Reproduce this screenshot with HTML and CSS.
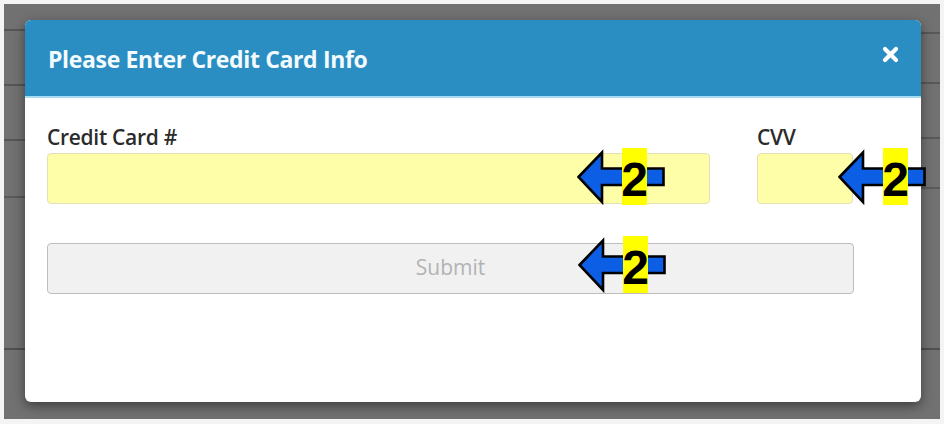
FILE: index.html
```html
<!DOCTYPE html>
<html lang="en">
<head>
<meta charset="utf-8">
<title>Please Enter Credit Card Info</title>
<link rel="stylesheet" href="styles.css">
</head>
<body>
<div class="backdrop">
  <div class="modal">
    <div class="modal-header">
      <h4 class="modal-title">Please Enter Credit Card Info</h4>
      <button class="close" type="button" aria-label="Close">
        <svg width="17" height="17" viewBox="0 0 17 17"><path d="M3 3 L14 14 M14 3 L3 14" stroke="#fff" stroke-width="4.2" stroke-linecap="round"/></svg>
      </button>
    </div>
    <div class="modal-body">
      <div class="row">
        <div class="field field-card">
          <label class="label">Credit Card #</label>
          <div class="input"></div>
        </div>
        <div class="field field-cvv">
          <label class="label">CVV</label>
          <div class="input"></div>
        </div>
      </div>
      <button class="submit" type="button">Submit</button>
    </div>

    <div class="note note-1">
      <svg class="arrow" width="88" height="58" viewBox="0 0 88 58"><polygon points="1.5,29 25,4.5 25,20.5 86.5,20.5 86.5,37 25,37 25,54" fill="#0c5fe4" stroke="#000" stroke-width="2.6" stroke-linejoin="miter"/></svg>
      <span class="num">2</span>
    </div>
    <div class="note note-2">
      <svg class="arrow" width="88" height="58" viewBox="0 0 88 58"><polygon points="1.5,29 25,4.5 25,20.5 86.5,20.5 86.5,37 25,37 25,54" fill="#0c5fe4" stroke="#000" stroke-width="2.6" stroke-linejoin="miter"/></svg>
      <span class="num">2</span>
    </div>
    <div class="note note-3">
      <svg class="arrow" width="88" height="58" viewBox="0 0 88 58"><polygon points="1.5,29 25,4.5 25,20.5 86.5,20.5 86.5,37 25,37 25,54" fill="#0c5fe4" stroke="#000" stroke-width="2.6" stroke-linejoin="miter"/></svg>
      <span class="num">2</span>
    </div>
  </div>
</div>
</body>
</html>
```
FILE: styles.css
```css
* { box-sizing: border-box; }

html, body {
  margin: 0;
  padding: 0;
  background: #f4f4f4;
  width: 944px;
  height: 424px;
  overflow: hidden;
}

body {
  padding: 4px 4px 5px 4px;
  font-family: "Open Sans", "DejaVu Sans", sans-serif;
}

.backdrop {
  height: 415px;
  background-color: #717171;
  background-image:
    linear-gradient(to bottom,
      transparent 25px, #555 25px, #555 27px, transparent 27px,
      transparent 80px, #555 80px, #555 82px, transparent 82px,
      transparent 135px, #555 135px, #555 137px, transparent 137px,
      transparent 192px, #595959 192px, #595959 194px, transparent 194px,
      transparent 344px, #4f4f4f 344px, #4f4f4f 346px, transparent 346px),
    linear-gradient(to bottom,
      transparent 28px, #585858 28px, #585858 30px, transparent 30px,
      transparent 78px, #585858 78px, #585858 80px, transparent 80px,
      transparent 133px, #585858 133px, #585858 135px, transparent 135px,
      transparent 183px, #5a5a5a 183px, #5a5a5a 185px, transparent 185px,
      transparent 344px, #4f4f4f 344px, #4f4f4f 346px, transparent 346px);
  background-size: 21px 100%, 19px 100%;
  background-position: left top, right top;
  background-repeat: no-repeat;
  padding: 16px 0 0 21px;
}

.modal {
  position: relative;
  width: 896px;
  height: 382px;
  background: #fff;
  border-radius: 6px;
  box-shadow: 0 4px 12px rgba(0, 0, 0, 0.45);
  display: flex;
  flex-direction: column;
}

.modal-header {
  height: 78px;
  background: #2a8ec3;
  border-bottom: 2px solid #a6dcf2;
  border-radius: 6px 6px 0 0;
  display: flex;
  align-items: center;
  justify-content: space-between;
  padding: 0 22px 0 23px;
}

.modal-title {
  margin: 0;
  color: #f4fbff;
  font-size: 23px;
  font-weight: 700;
  letter-spacing: -0.35px;
  line-height: 30px;
  padding-top: 2px;
}

.close {
  border: 0;
  background: none;
  padding: 0;
  margin: -8px 0 0 0;
  width: 17px;
  height: 17px;
  display: flex;
}

.modal-body {
  padding: 27px 0 0 22px;
  display: flex;
  flex-direction: column;
}

.row {
  display: flex;
  gap: 47px;
}

.field {
  display: flex;
  flex-direction: column;
}

.field-card { width: 663px; }
.field-cvv { width: 96px; }

.label {
  font-size: 21px;
  font-weight: 600;
  color: #2b2b2b;
  line-height: 24px;
  letter-spacing: -0.3px;
  margin-bottom: 4px;
}

.input {
  height: 51px;
  background: #fefea8;
  border: 1px solid #e2e0b4;
  border-radius: 4px;
}

.submit {
  margin-top: 39px;
  width: 807px;
  height: 51px;
  background: #f1f1f1;
  border: 1px solid #bdbdbd;
  border-radius: 4px;
  color: #b3b3b3;
  font-family: "Open Sans", "DejaVu Sans", sans-serif;
  font-size: 21px;
  padding: 0 0 4px 0;
}

.note {
  position: absolute;
  width: 88px;
  height: 58px;
}

.note-1 { left: 552px; top: 128px; }
.note-2 { left: 813px; top: 128px; }
.note-3 { left: 553px; top: 216px; }

.arrow {
  position: absolute;
  left: 0;
  top: 0;
}

.num {
  position: absolute;
  left: 45px;
  top: 0;
  width: 25px;
  height: 57px;
  background: #ffff00;
  color: #000;
  font-family: "Liberation Sans", Arial, sans-serif;
  font-weight: 700;
  font-size: 48px;
  line-height: 57px;
  text-align: center;
  display: flex;
  justify-content: center;
  padding-top: 3px;
}
```
